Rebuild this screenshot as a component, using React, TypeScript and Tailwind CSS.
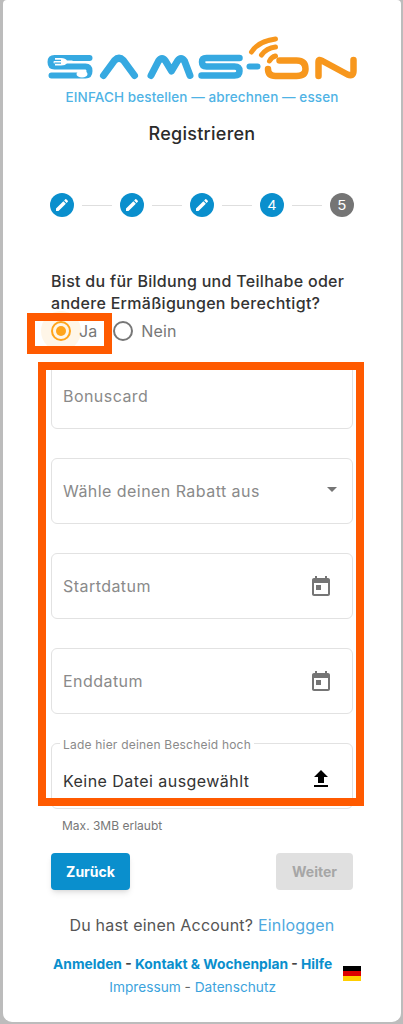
const font = "font-['Inter','Liberation_Sans',sans-serif]";

const Logo = () => (
  <svg width="330" height="58" viewBox="36.5 32 330 58" fill="none" strokeLinecap="round" strokeLinejoin="round">
    <g stroke="#36a9e1" strokeWidth="6">
      <path d="M89 58H54Q50 58 50 62Q50 66.500 54 66.500H85Q89 66.500 89 71Q89 75.500 85 75.500H51" />
      <path d="M249 66.500H257" />
    </g>
    <g stroke="#36a9e1" strokeWidth="7">
      <path d="M103 75.500L114 60.500Q118.500 56 123 60.500L134 75.500" />
      <path d="M150.500 75.500L158 61Q161.500 56 165 61L171 71L177 61Q180.500 56 184 61L189.500 75.500" />
    </g>
    <path d="M239 58H206Q201.500 58 201.500 62Q201.500 66.500 206 66.500H234Q239 66.500 239 71Q239 75.500 234 75.500H201" stroke="#36a9e1" strokeWidth="6.500" />
    {/* fork and spoon cut out of the S */}
    <path d="M54.500 58H60.500Q65 58 66.500 60.500H72V63H66.500Q65 65.500 60.500 65.500H54.500Z" fill="#fff" />
    <path d="M54 60.300H60.500M54 63.200H60.500" stroke="#36a9e1" strokeWidth="1.200" strokeLinecap="butt" />
    <ellipse cx="81.500" cy="74" rx="5.500" ry="3.600" fill="#fff" />
    <g stroke="#f7971d" strokeWidth="6.500">
      <path d="M279 60.500H296Q305 60.500 305 69Q305 76 296 76H275Q267.500 76 267.500 69" />
      <path d="M318 76V62Q318 58.500 322 61L347 74.500Q353 77 353 71V60" />
    </g>
    <g stroke="#f7971d" strokeWidth="5">
      <path d="M251 52Q258 41 275 39" />
      <path d="M261 55Q266 48 275 47" />
      <path d="M269 61Q271 57 275 56" />
    </g>
  </svg>
);

const StepEdit = () => (
  <div className="flex h-6 w-6 shrink-0 items-center justify-center rounded-full bg-[#0a8fcd]">
    <svg width="16" height="16" viewBox="0 0 24 24" fill="#fff">
      <path d="M3 17.25V21h3.75L17.81 9.94l-3.75-3.75L3 17.25zM20.71 7.04c.39-.39.39-1.02 0-1.41l-2.34-2.34c-.39-.39-1.02-.39-1.41 0l-1.83 1.83 3.75 3.75 1.83-1.83z" />
    </svg>
  </div>
);

const Connector = () => <div className="mx-2 h-px flex-1 bg-[#dedede]" />;

const TodayIcon = () => (
  <svg width="24" height="24" viewBox="0 0 24 24" fill="#757575" className="mt-px">
    <path d="M19 3h-1V1h-2v2H8V1H6v2H5c-1.11 0-1.990.9-1.990 2L3 19c0 1.100.89 2 2 2h14c1.100 0 2-.9 2-2V5c0-1.100-.9-2-2-2zm0 16H5V8h14v11zM7 10h5v5H7z" />
  </svg>
);

const Field = ({ label, children }: { label: string; children?: React.ReactNode }) => (
  <div className="flex h-[66px] items-center justify-between rounded-md border border-[#e2e2e2] pl-[11px] pr-[19px]">
    <span className="text-[16px] tracking-[0.45px] text-[#8a8a8a]">{label}</span>
    {children}
  </div>
);

export default function App() {
  return (
    <div className={`${font} h-[1024px] w-full bg-[#bcbcbc] pb-[2px] pl-[3px] pr-[2px]`}>
      <div className="relative h-full rounded-t-[4px] rounded-b-[9px] bg-white">
        <div className="flex flex-col items-center pt-[32px]">
          <Logo />
          <div className="-mt-[3px] text-[13.500px] font-medium tracking-[0.1px] text-[#4fb3e5]">
            EINFACH bestellen — abrechnen — essen
          </div>
          <h1 className="mt-[13px] text-[18px] font-medium tracking-[0.25px] text-[#2b2b2b]">Registrieren</h1>
        </div>

        <div className="px-[48px]">
          <div className="-mx-px mt-[46px] flex items-center">
            <StepEdit />
            <Connector />
            <StepEdit />
            <Connector />
            <StepEdit />
            <Connector />
            <div className="flex h-6 w-6 shrink-0 items-center justify-center rounded-full bg-[#0a8fcd] font-['Liberation_Sans',sans-serif] text-[15px] text-white">4</div>
            <Connector />
            <div className="flex h-6 w-6 shrink-0 items-center justify-center rounded-full bg-[#757575] font-['Liberation_Sans',sans-serif] text-[15px] text-white">5</div>
          </div>

          <p className="mt-[53px] text-[16px] font-medium leading-[22px] tracking-[0.3px] text-[#333]">
            Bist du für Bildung und Teilhabe oder andere Ermäßigungen berechtigt?
          </p>

          <div className="mt-[3px] flex h-[28px] items-center">
            <div className="relative flex h-5 w-5 shrink-0 items-center justify-center rounded-full border-2 border-[#ffa41b]">
              <div className="absolute h-[40px] w-[40px] rounded-full bg-[#ffa41b]/10" />
              <div className="h-[10px] w-[10px] rounded-full bg-[#ffa41b]" />
            </div>
            <span className="ml-[8px] text-[16px] text-[#777]">Ja</span>
            <div className="ml-[16px] h-5 w-5 shrink-0 rounded-full border-2 border-[#777]" />
            <span className="ml-[8px] text-[16px] tracking-[0.2px] text-[#777]">Nein</span>
          </div>

          <div className="mt-[18px] flex flex-col gap-[29px]">
            <Field label="Bonuscard" />
            <Field label="Wähle deinen Rabatt aus">
              <div className="mr-[-4px] -mt-[4px] h-0 w-0 border-x-[5px] border-t-[5px] border-x-transparent border-t-[#757575]" />
            </Field>
            <Field label="Startdatum">
              <TodayIcon />
            </Field>
            <Field label="Enddatum">
              <TodayIcon />
            </Field>
            <div className="relative flex h-[66px] items-center justify-between rounded-md border border-[#e2e2e2] pl-[11px] pr-[19px] pt-[10px]">
              <span className="absolute -top-[5px] left-[8px] bg-white px-[3px] text-[12px] leading-[12px] tracking-[0.2px] text-[#8a8a8a]">
                Lade hier deinen Bescheid hoch
              </span>
              <span className="text-[16px] tracking-[0.45px] text-[#333]">Keine Datei ausgewählt</span>
              <svg width="24" height="24" viewBox="0 0 24 24" fill="#000" className="-mt-[4px]">
                <path d="M9 16h6v-6h4l-7-7-7 7h4zm-4 2h14v2H5z" />
              </svg>
            </div>
          </div>

          <div className="mt-[8px] pl-[11px] text-[12px] text-[#777]">Max. 3MB erlaubt</div>

          <div className="mt-[18px] flex justify-between">
            <button className="h-[37px] w-[79px] rounded bg-[#0a8fcd] text-[14px] font-bold text-white shadow-md">Zurück</button>
            <button className="h-[37px] w-[77px] rounded bg-[#e0e0e0] text-[14px] font-bold text-[#a6a6a6]">Weiter</button>
          </div>

          <div className="mt-[23px] text-center text-[16px] tracking-[0.2px] text-[#555]">
            Du hast einen Account? <span className="text-[#4fa9e0]">Einloggen</span>
          </div>
        </div>

        <div className="mt-[17px] flex items-center justify-between pl-[50px] pr-[40px]">
          <div className="flex flex-col items-center gap-[2px]">
            <div className="text-[13.800px] font-bold text-[#0a8fcd]">
              Anmelden <span className="text-[#444]">-</span> Kontakt &amp; Wochenplan <span className="text-[#444]">-</span> Hilfe
            </div>
            <div className="text-[13.700px] text-[#3ba3dd]">
              Impressum <span className="text-[#666]">-</span> Datenschutz
            </div>
          </div>
          <div className="-mt-[4px] flex w-[18px] flex-col">
            <div className="h-[5px] bg-black" />
            <div className="h-[5px] bg-[#dd0000]" />
            <div className="h-[5px] bg-[#ffce00]" />
          </div>
        </div>

        {/* orange annotation boxes on top of the form */}
        <div className="absolute left-[24px] top-[313px] h-[41px] w-[85px] border-[8px] border-[#ff5a00]" />
        <div className="absolute left-[35px] top-[362px] h-[444px] w-[326px] border-[8px] border-[#ff5a00]" />
      </div>
    </div>
  );
}
